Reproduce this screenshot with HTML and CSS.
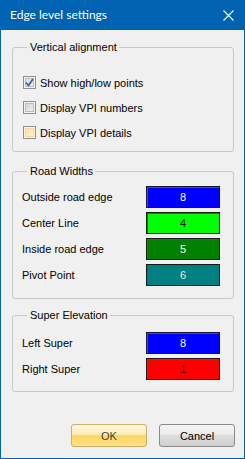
FILE: index.html
```html
<!DOCTYPE html>
<html lang="en">
<head>
    <title>Edge level settings</title>
    <link rel="stylesheet" href="styles.css">
</head>
<body>

    <div class="window">
        <div class="titlebar">
            <span class="title">Edge level settings</span>
            <svg class="close" width="11" height="11" viewBox="0 0 11 11">
                <path d="M0.5 0.5 L10.5 10.5 M10.5 0.5 L0.5 10.5" stroke="#fff" stroke-width="1.1" fill="none"/>
            </svg>
        </div>

        <div class="content">
            <fieldset class="group group-va">
                <legend>Vertical alignment</legend>
                <div class="check-row">
                    <span class="checkbox checked">
                        <svg width="9" height="9" viewBox="0 0 9 9">
                            <path d="M1 4.5 L3.5 7.5 L8 1" stroke="#4a5f97" stroke-width="1.8" fill="none"/>
                        </svg>
                    </span>
                    <label>Show high/low points</label>
                </div>
                <div class="check-row">
                    <span class="checkbox"></span>
                    <label>Display VPI numbers</label>
                </div>
                <div class="check-row">
                    <span class="checkbox hot"></span>
                    <label>Display VPI details</label>
                </div>
            </fieldset>

            <fieldset class="group group-rw">
                <legend>Road Widths</legend>
                <div class="color-row">
                    <label>Outside road edge</label>
                    <div class="swatch sw-blue">8</div>
                </div>
                <div class="color-row">
                    <label>Center Line</label>
                    <div class="swatch sw-lime">4</div>
                </div>
                <div class="color-row">
                    <label>Inside road edge</label>
                    <div class="swatch sw-green">5</div>
                </div>
                <div class="color-row">
                    <label>Pivot Point</label>
                    <div class="swatch sw-teal">6</div>
                </div>
            </fieldset>

            <fieldset class="group group-se">
                <legend>Super Elevation</legend>
                <div class="color-row">
                    <label>Left Super</label>
                    <div class="swatch sw-blue">8</div>
                </div>
                <div class="color-row">
                    <label>Right Super</label>
                    <div class="swatch sw-red">1</div>
                </div>
            </fieldset>

            <div class="buttons">
                <button class="btn btn-ok">OK</button>
                <button class="btn btn-cancel">Cancel</button>
            </div>
        </div>
    </div>

</body>
</html>
```

FILE: styles.css
```css
body {
    margin: 0;
    background-color: #f0f0f0;
    font-family: "Liberation Sans", Arial, sans-serif;
    font-size: 11px;
    color: #000;
}

.window {
    width: 245px;
    height: 459px;
    box-sizing: border-box;
    border: 1px solid #0063b1;
    border-top: none;
    background: #f0f0f0;
    display: flex;
    flex-direction: column;
}

.titlebar {
    height: 30px;
    margin: 0 -1px;
    background: #0063b1;
    display: flex;
    align-items: center;
    justify-content: space-between;
    padding: 0 10px 0 10px;
    color: #fff;
}

.title {
    font-family: Lato, sans-serif;
    font-size: 12px;
    margin-top: -1px;
}

.close {
    margin-right: 1px;
}

.content {
    flex: 1;
    display: flex;
    flex-direction: column;
}

.group {
    margin: 0 10px 0 11px;
    padding: 0 0 0 9px;
    border: 1px solid #c8c8c8;
    border-radius: 3px;
    min-width: 0;
}

.group legend {
    margin-left: 5px;
    padding: 0 2px 0 3px;
    line-height: 13px;
}

.group-va {
    margin-top: 11px;
    padding-top: 22px;
    padding-bottom: 12px;
}

.group-rw {
    margin-top: 13px;
    padding-top: 8px;
    padding-bottom: 12px;
}

.group-se {
    margin-top: 10px;
    padding-top: 10px;
    padding-bottom: 11px;
}

.check-row {
    display: flex;
    align-items: center;
    height: 13px;
    margin-left: 1px;
}

.check-row + .check-row {
    margin-top: 12px;
}

.check-row label {
    margin-left: 4px;
}

.checkbox {
    width: 13px;
    height: 13px;
    box-sizing: border-box;
    border: 1px solid #8e8f8f;
    background: #f4f4f4;
    box-shadow: inset 0 0 0 1px #f4f4f4, inset 0 0 0 2px #bcbcbc;
    background-image: linear-gradient(135deg, #cbcfd5, #f6f6f6);
    display: flex;
    align-items: center;
    justify-content: center;
}

.checkbox.checked {
    background-image: linear-gradient(135deg, #d6d8dc, #f6f6f6);
}

.checkbox.hot {
    box-shadow: inset 0 0 0 1px #fff2d8, inset 0 0 0 2px #f9d99b;
    background-image: linear-gradient(135deg, #fbd79a, #fff8e6);
}

.color-row {
    display: flex;
    align-items: center;
    justify-content: space-between;
    height: 22px;
    padding-right: 13px;
}

.color-row + .color-row {
    margin-top: 4px;
}

.swatch {
    width: 74px;
    height: 22px;
    box-sizing: border-box;
    border: 1px solid #1a1a1a;
    box-shadow: inset 1px 1px 0 #555;
    display: flex;
    align-items: center;
    justify-content: center;
    font-size: 11px;
}

.sw-blue { background-color: #0000ff; color: #fff; }
.sw-lime { background-color: #00ff00; color: #000; }
.sw-green { background-color: #008000; color: #fff; }
.sw-teal { background-color: #008080; color: #e8e8e8; }
.sw-red { background-color: #ff0000; color: #300; }

.buttons {
    display: flex;
    justify-content: flex-end;
    gap: 12px;
    margin-top: auto;
    margin-bottom: 11px;
    padding-right: 9px;
}

.btn {
    width: 76px;
    height: 23px;
    border-radius: 3px;
    font-family: "Liberation Sans", Arial, sans-serif;
    font-size: 11px;
    padding: 0;
}

.btn-ok {
    border: 1px solid #c9b06c;
    color: #3c3c3c;
    background: linear-gradient(#fef7dc 0%, #fdedb5 45%, #fcd85e 50%, #fde08a 100%);
}

.btn-cancel {
    border: 1px solid #8a8a8a;
    color: #000;
    background: linear-gradient(#f4f4f4 0%, #ebebeb 45%, #dddddd 50%, #cfcfcf 100%);
}
```
